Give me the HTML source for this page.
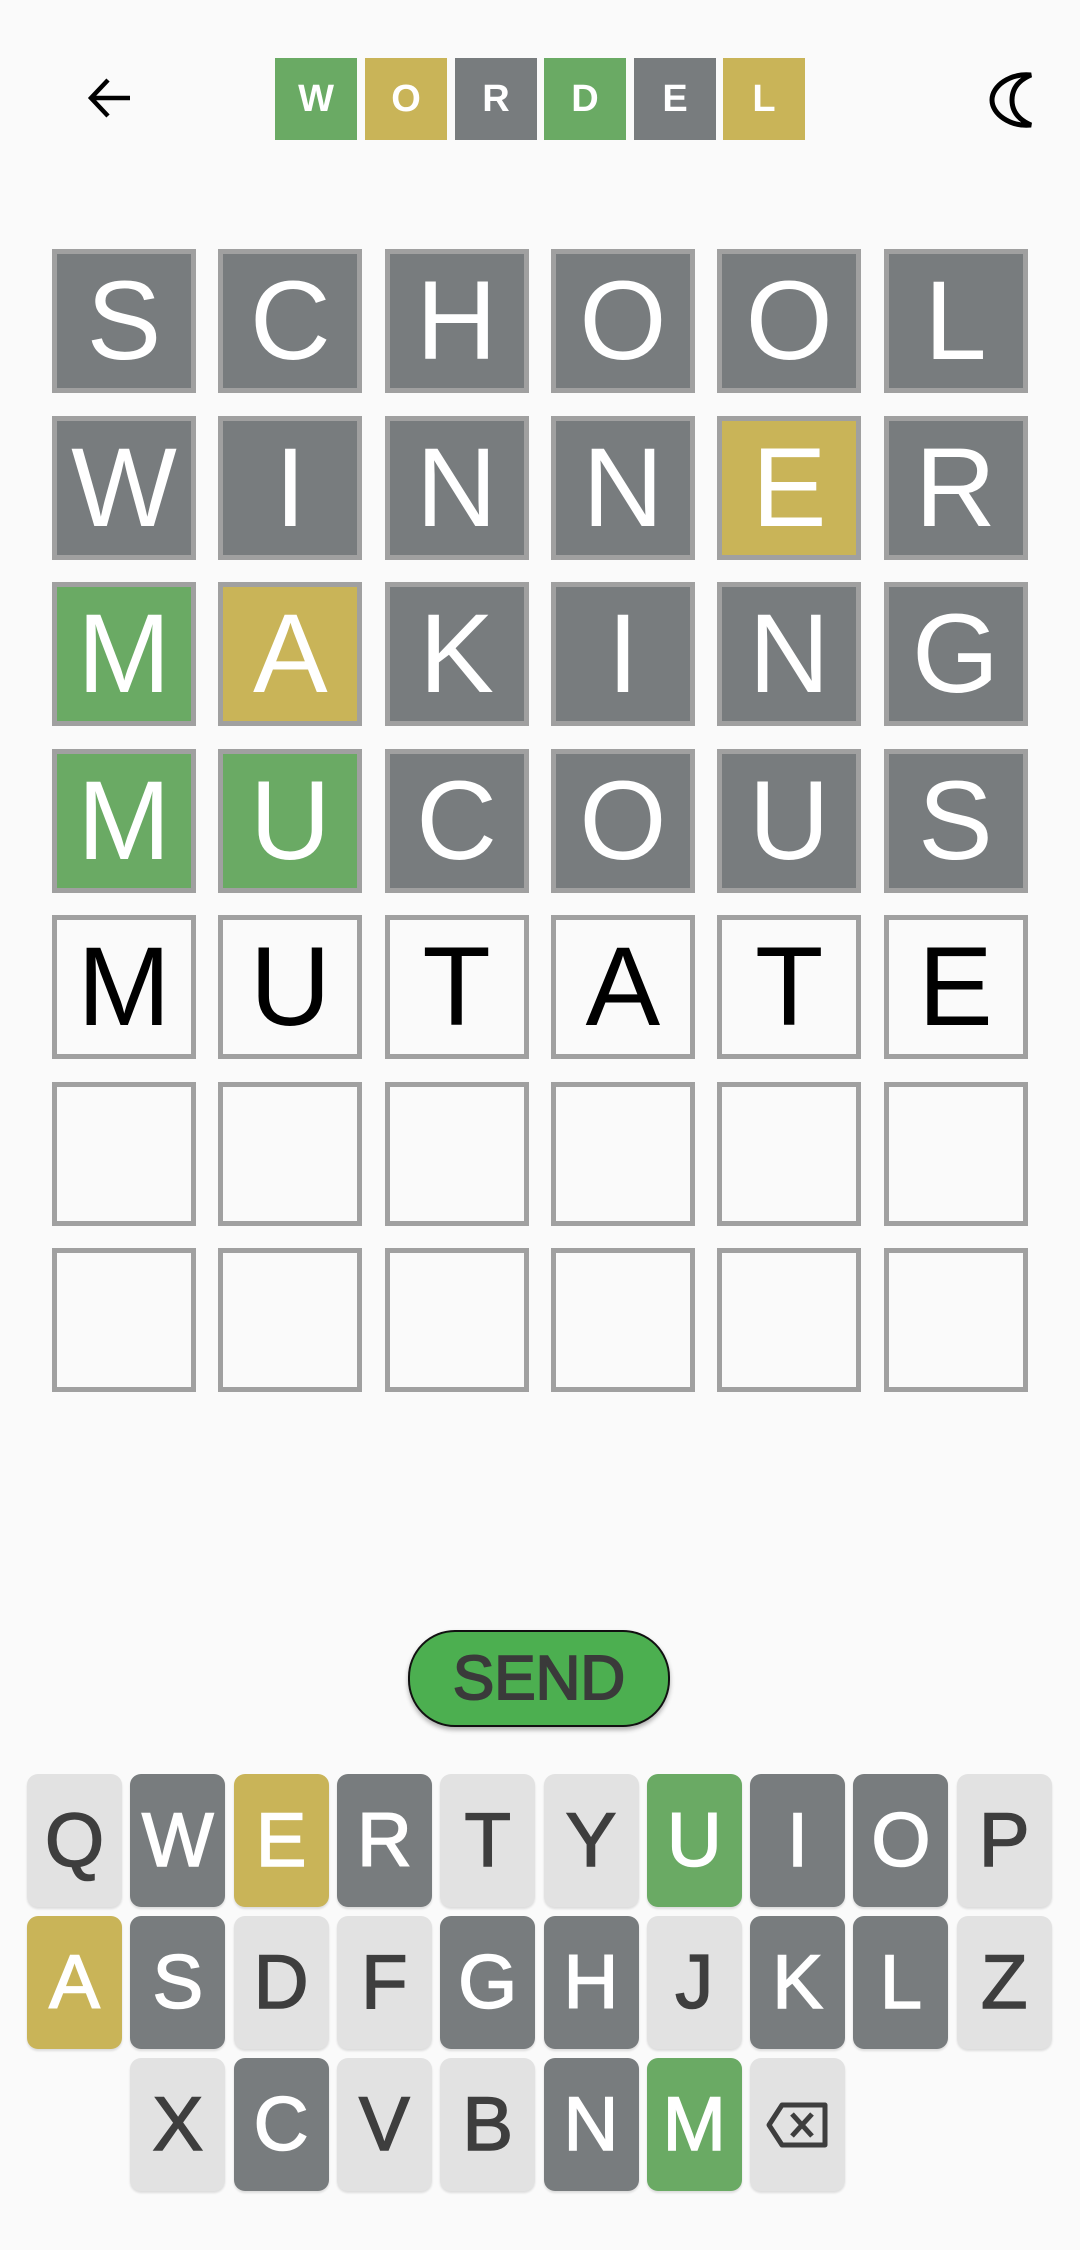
<!DOCTYPE html>
<html><head><meta charset="utf-8"><style>
html,body{margin:0;padding:0;background:#fafafa;width:1080px;height:2250px;overflow:hidden;font-family:"Liberation Sans",sans-serif;position:relative}
.logo{position:absolute;top:58px;width:82px;height:82px;color:#fff;font-weight:bold;font-size:38px;display:flex;align-items:center;justify-content:center}
.t{position:absolute;width:134px;height:134px;border:5px solid #a0a0a0;display:flex;align-items:center;justify-content:center;font-size:112px;color:#fff;line-height:1}
.g{background:#787c7e}.y{background:#c9b458}.n{background:#6aaa64}.e{background:#fafafa;color:#000}
.k{position:absolute;width:95px;height:133px;border-radius:11px;display:flex;align-items:center;justify-content:center;font-size:76px;color:#fff;box-shadow:0 2px 2px rgba(0,0,0,.12);-webkit-text-stroke:1.6px currentColor}
.k.l{background:#e2e2e2;color:#3e3e3e}
.send{position:absolute;left:408px;top:1630px;width:258px;height:93px;border:2.5px solid #111;border-radius:47px;background:#4caf50;color:#3a3a3a;font-size:62px;display:flex;align-items:center;justify-content:center;box-shadow:0 3px 5px rgba(0,0,0,.3);-webkit-text-stroke:2px #3a3a3a}
</style></head><body>
<svg style="position:absolute;left:86px;top:76px" width="48" height="44" viewBox="0 0 48 44"><path d="M44 22H6M22 4L5 22l17 18" fill="none" stroke="#000" stroke-width="4.5"/></svg>
<svg style="position:absolute;left:988px;top:70px" width="48" height="58" viewBox="0 0 48 58"><path d="M43 5C22 3 4 16 4 30s18 27 39 25C29 49 24 40 24 30S29 11 43 5Z" fill="none" stroke="#000" stroke-width="5"/></svg>
<div class="logo n" style="left:275px">W</div>
<div class="logo y" style="left:365px">O</div>
<div class="logo g" style="left:455px">R</div>
<div class="logo n" style="left:544px">D</div>
<div class="logo g" style="left:634px">E</div>
<div class="logo y" style="left:723px">L</div>
<div id="grid"></div>
<div class="send">SEND</div>
<div id="kb"></div>
<script>
var rows=[["S","C","H","O","O","L","gggggg"],["W","I","N","N","E","R","ggggyg"],["M","A","K","I","N","G","nygggg"],["M","U","C","O","U","S","nngggg"],["M","U","T","A","T","E","eeeeee"],["","","","","","","eeeeee"],["","","","","","","eeeeee"]];
var h="";
for(var r=0;r<7;r++)for(var c=0;c<6;c++){h+='<div class="t '+rows[r][6][c]+'" style="left:'+(52+c*166.3)+'px;top:'+(249+r*166.5)+'px">'+rows[r][c]+'</div>';}
document.getElementById("grid").innerHTML=h;
var kr=[[0,"Q:l W:g E:y R:g T:l Y:l U:n I:g O:g P:l"],[0,"A:y S:g D:l F:l G:g H:g J:l K:g L:g Z:l"],[1,"X:l C:g V:l B:l N:g M:n ⌫:l"]];
var tops=[1774,1916,2058];
var k="";
for(var i=0;i<3;i++){var ks=kr[i][1].split(" ");for(var j=0;j<ks.length;j++){var p=ks[j].split(":");var x=27+(kr[i][0]+j)*103.3;var lab=p[0];
if(lab=="⌫")lab='<svg width="66" height="52" viewBox="0 0 66 52" style="-webkit-text-stroke:0"><path d="M17 6H60V46H17L4 26Z" fill="none" stroke="#3e3e3e" stroke-width="5" stroke-linejoin="round"/><path d="M27 15L47 37M47 15L27 37" stroke="#3e3e3e" stroke-width="5"/></svg>';
k+='<div class="k '+p[1]+'" style="left:'+x+'px;top:'+tops[i]+'px">'+lab+'</div>';}}
document.getElementById("kb").innerHTML=k;
</script>
</body></html>
